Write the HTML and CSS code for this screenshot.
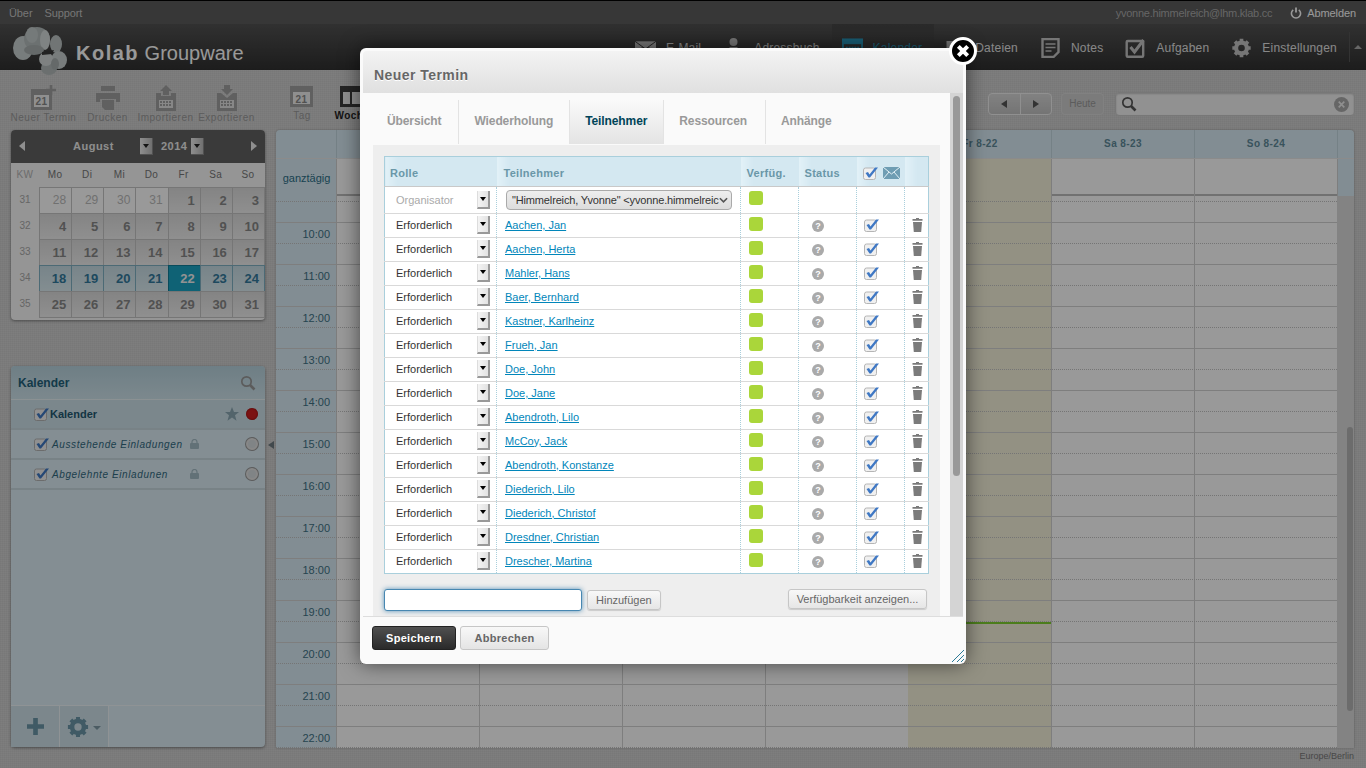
FILE: index.html
```html
<!DOCTYPE html>
<html lang="de">

<head>
    <meta charset="UTF-8">
    <title>Kolab Groupware - Kalender</title>
    <link rel="stylesheet" href="styles.css">
</head>

<body>
    <svg class="defs" aria-hidden="true">
        <symbol id="i-check" viewBox="0 0 15 13">
            <rect x=".5" y="1" width="12" height="11.500" rx="2" fill="#f0f0f0" stroke="#b5b5b5"/>
            <path d="M2.500 6L5 5l1.500 2.500L12 .5h3L7 10.500H5.500z" fill="#3f78c4"/>
        </symbol>
        <symbol id="i-trash" viewBox="0 0 11 14">
            <path d="M4 0h3v1h3.500v1.800H.5V1H4z" fill="#7b7b7b"/>
            <path d="M1 4h9l-.8 10H1.800z" fill="#7b7b7b"/>
        </symbol>
        <symbol id="i-gear" viewBox="0 0 24 24">
            <circle cx="12" cy="12" r="6.500" fill="none" stroke="currentColor" stroke-width="5"/>
            <path d="M12 1v5M12 18v5M1 12h5M18 12h5M4.200 4.200l3.500 3.500M16.300 16.300l3.500 3.500M4.200 19.800l3.500-3.500M16.300 7.700l3.500-3.500" stroke="currentColor" stroke-width="4.400"/>
        </symbol>
        <symbol id="i-search" viewBox="0 0 16 16">
            <circle cx="6.500" cy="6.500" r="4.700" fill="none" stroke="currentColor" stroke-width="1.700"/>
            <path d="M10 10l4.500 4.500" stroke="currentColor" stroke-width="2.600"/>
        </symbol>
        <symbol id="i-lock" viewBox="0 0 9 10">
            <path d="M2 4V3a2.500 2.500 0 0 1 5 0v1" fill="none" stroke="currentColor" stroke-width="1.200"/>
            <rect y="4" width="9" height="6" rx="1" fill="currentColor"/>
        </symbol>
    </svg>

    <div class="topbar">
        <div class="toplinks"><a>Über</a><a>Support</a></div>
        <div class="topuser">
            <span class="username">yvonne.himmelreich@lhm.klab.cc</span>
            <svg class="power" viewBox="0 0 12 12"><path d="M3.200 2.800a4.600 4.600 0 1 0 5.600 0" fill="none" stroke="currentColor" stroke-width="1.600"/><path d="M6 .5v5" stroke="currentColor" stroke-width="1.800"/></svg>
            <a>Abmelden</a>
        </div>
    </div>

    <header class="header">
        <svg class="logo" viewBox="0 0 54 48">
            <ellipse cx="10" cy="21" rx="10" ry="12" fill="#c9d0d0"/>
            <ellipse cx="24" cy="12" rx="13" ry="12" fill="#b4bcbc"/>
            <ellipse cx="19" cy="8" rx="6" ry="8" fill="#c4cbcb"/>
            <ellipse cx="32" cy="13" rx="5" ry="10" fill="#d4dada"/>
            <ellipse cx="43" cy="17" rx="6" ry="9" fill="#bcc4c4"/>
            <ellipse cx="21" cy="23" rx="10" ry="5" fill="#a8b0b0"/>
            <ellipse cx="46" cy="33" rx="8" ry="9" fill="#c8cfcf"/>
            <ellipse cx="36" cy="41" rx="8" ry="7" fill="#b2baba"/>
            <ellipse cx="33" cy="32" rx="7" ry="7" fill="#d2d8d8"/>
            <ellipse cx="42" cy="37" rx="4" ry="6" fill="#a8b0b0"/>
            <path d="M29 25l12-2-2 4-10 1z" fill="#3a3a3a"/>
        </svg>
        <div class="brand"><b>Kolab</b> Groupware</div>
        <nav class="nav">
            <a class="nav-item">
                <svg class="nav-icon" viewBox="0 0 22 20"><rect y="3" width="22" height="14" fill="currentColor"/><path d="M0 3l11 8 11-8M0 17l8-8M22 17l-8-8" fill="none" stroke="#333" stroke-width="1"/></svg>
                E-Mail
            </a>
            <a class="nav-item">
                <svg class="nav-icon" viewBox="0 0 20 20"><circle cx="10" cy="4" r="4" fill="currentColor"/><path d="M6 9h8v11H6z" fill="currentColor"/></svg>
                Adressbuch
            </a>
            <a class="nav-item active">
                <svg class="nav-icon" viewBox="0 0 22 20"><rect x="1" y="1" width="20" height="18" fill="none" stroke="currentColor" stroke-width="2"/><rect x="1" y="1" width="20" height="5" fill="currentColor"/><path d="M4 10h14M4 14h14" stroke="currentColor" stroke-width="2.400" stroke-dasharray="2 1"/></svg>
                Kalender
            </a>
            <a class="nav-item">
                <svg class="nav-icon" viewBox="0 0 20 20"><path d="M2 3h6l2 2h8v13H2z" fill="currentColor"/></svg>
                Dateien
            </a>
            <a class="nav-item">
                <svg class="nav-icon" viewBox="0 0 20 20"><path d="M2 1h16v13l-5 5H2z" fill="none" stroke="currentColor" stroke-width="2.400"/><path d="M5 6h10M5 9.500h10M5 13h6" stroke="currentColor" stroke-width="1.700"/></svg>
                Notes
            </a>
            <a class="nav-item">
                <svg class="nav-icon" viewBox="0 0 20 20"><rect x="1.200" y="3" width="16.500" height="15.800" rx="1" fill="none" stroke="currentColor" stroke-width="2.400"/><path d="M5 9l4 5 9-12" fill="none" stroke="currentColor" stroke-width="3"/></svg>
                Aufgaben
            </a>
            <a class="nav-item">
                <svg class="nav-icon"><use href="#i-gear"/></svg>
                Einstellungen
            </a>
            <span class="nav-more"></span>
        </nav>
    </header>

    <div class="toolbar">
        <a class="tool">
            <svg class="tool-icon" viewBox="0 0 26 26"><rect y="4" width="21" height="21" fill="#a0a0a0"/><rect x="3" y="10" width="15" height="12" fill="#eee"/><text x="10.500" y="20" class="cal-num">21</text><path d="M20 0v10M15 5h10" stroke="#a0a0a0" stroke-width="2.600"/></svg>
            Neuer Termin
        </a>
        <a class="tool tool-print">
            <svg class="tool-icon" viewBox="0 0 26 26"><rect x="6" y="1" width="14" height="5" fill="#a0a0a0"/><path d="M1 8h24v9h-4v-3H5v3H1z" fill="#a0a0a0"/><path d="M7 15h12v10H10l-3-3z" fill="#a0a0a0"/></svg>
            Drucken
        </a>
        <a class="tool">
            <svg class="tool-icon" viewBox="0 0 26 26"><path d="M13 0l6 6h-3v4h-6V6H7z" fill="#a0a0a0"/><path d="M3 8h5v3h10V8h5v18H3z" fill="#a0a0a0"/><rect x="6" y="15" width="14" height="8" fill="#e2e2e2"/><path d="M7 17h12M7 20h12" stroke="#a0a0a0" stroke-width="2" stroke-dasharray="2 1"/></svg>
            Importieren
        </a>
        <a class="tool">
            <svg class="tool-icon" viewBox="0 0 26 26"><path d="M10 0h6v4h3l-6 6-6-6h3z" fill="#a0a0a0"/><path d="M3 8h4l6 5 6-5h4v18H3z" fill="#a0a0a0"/><rect x="6" y="15" width="14" height="8" fill="#e2e2e2"/><path d="M7 17h12M7 20h12" stroke="#a0a0a0" stroke-width="2" stroke-dasharray="2 1"/></svg>
            Exportieren
        </a>
        <a class="tool tool-view">
            <svg class="tool-icon" viewBox="0 0 26 26"><rect x="1" y="3" width="23" height="21" fill="#a0a0a0"/><rect x="4" y="9" width="17" height="12" fill="#eee"/><text x="12.500" y="20" class="cal-num">21</text></svg>
            Tag
        </a>
        <a class="tool tool-week">
            <svg class="tool-icon" viewBox="0 0 26 26"><rect x="1" y="3" width="23" height="21" fill="#3c3c3c"/><rect x="4" y="9" width="7" height="12" fill="#eee"/><rect x="13" y="9" width="8" height="12" fill="#eee"/></svg>
            Woche
        </a>
        <div class="toolbar-right">
            <div class="btn-group">
                <span class="nav-btn"><i class="tri-left"></i></span>
                <span class="nav-btn"><i class="tri-right"></i></span>
            </div>
            <span class="today-btn">Heute</span>
            <div class="searchbox">
                <svg class="search-icon"><use href="#i-search"/></svg>
                <svg class="search-reset" viewBox="0 0 16 16"><circle cx="8" cy="8" r="8" fill="#aaa"/><path d="M5 5l6 6M11 5l-6 6" stroke="#eee" stroke-width="1.800"/></svg>
            </div>
        </div>
    </div>

    <main class="main">
        <aside class="sidebar">
            <section class="minical">
                <div class="minical-head">
                    <i class="arrow-left"></i>
                    <span class="month">August</span>
                    <span class="drop"></span>
                    <span class="year">2014</span>
                    <span class="drop"></span>
                    <i class="arrow-right"></i>
                </div>
                <div class="minical-grid">
                    <span class="dow kw-h">KW</span><span class="dow">Mo</span><span class="dow">Di</span><span class="dow">Mi</span><span class="dow">Do</span><span class="dow">Fr</span><span class="dow">Sa</span><span class="dow">So</span>

                    <span class="kw">31</span><span class="day other">28</span><span class="day other">29</span><span class="day other">30</span><span class="day other">31</span><span class="day">1</span><span class="day">2</span><span class="day">3</span>
                    <span class="kw">32</span><span class="day">4</span><span class="day">5</span><span class="day">6</span><span class="day">7</span><span class="day">8</span><span class="day">9</span><span class="day">10</span>
                    <span class="kw">33</span><span class="day">11</span><span class="day">12</span><span class="day">13</span><span class="day">14</span><span class="day">15</span><span class="day">16</span><span class="day">17</span>
                    <span class="kw">34</span><span class="day week">18</span><span class="day week">19</span><span class="day week">20</span><span class="day week">21</span><span class="day today">22</span><span class="day week">23</span><span class="day week">24</span>
                    <span class="kw">35</span><span class="day">25</span><span class="day">26</span><span class="day">27</span><span class="day">28</span><span class="day">29</span><span class="day">30</span><span class="day">31</span>
                </div>
            </section>

            <section class="callist">
                <div class="callist-head">
                    <span>Kalender</span>
                    <svg class="callist-search"><use href="#i-search"/></svg>
                </div>
                <div class="callist-row selected">
                    <svg class="ic-check"><use href="#i-check"/></svg>
                    <span class="cal-name">Kalender</span>
                    <svg class="star" viewBox="0 0 14 14"><path d="M7 0l2 5h5l-4 3.300 1.500 5.500L7 10.600 2.500 13.800 4 8.300 0 5h5z" fill="currentColor"/></svg>
                    <span class="dot red"></span>
                </div>
                <div class="callist-row">
                    <svg class="ic-check"><use href="#i-check"/></svg>
                    <span class="cal-name shared">Ausstehende Einladungen</span>
                    <svg class="lock"><use href="#i-lock"/></svg>
                    <span class="dot"></span>
                </div>
                <div class="callist-row">
                    <svg class="ic-check"><use href="#i-check"/></svg>
                    <span class="cal-name shared">Abgelehnte Einladunen</span>
                    <svg class="lock"><use href="#i-lock"/></svg>
                    <span class="dot"></span>
                </div>
                <div class="callist-foot">
                    <span class="foot-btn">
                        <svg class="foot-plus" viewBox="0 0 16 16"><path d="M8 0v16M0 8h16" stroke="currentColor" stroke-width="4.400"/></svg>
                    </span>
                    <span class="foot-btn foot-gear">
                        <svg class="foot-gear-icon"><use href="#i-gear"/></svg>
                        <i class="tri-down"></i>
                    </span>
                </div>
            </section>
        </aside>

        <div class="splitter"><i class="tri-left"></i></div>

        <section class="calendar">
            <div class="cal-head">
                <span></span><span></span><span></span><span></span><span></span>
                <span>Fr 8-22</span><span>Sa 8-23</span><span>So 8-24</span><span></span>
            </div>
            <div class="cal-allday">
                <span class="allday-label">ganztägig</span>
                <span></span><span></span><span></span><span></span><span class="is-today"></span><span></span><span></span><span class="allday-end"></span>
            </div>
            <div class="cal-body">
                <div class="cal-rows">
                    <div class="hour"><span class="time"></span><span class="slots"></span></div>
                    <div class="hour"><span class="time">10:00</span><span class="slots"></span></div>
                    <div class="hour"><span class="time">11:00</span><span class="slots"></span></div>
                    <div class="hour"><span class="time">12:00</span><span class="slots"></span></div>
                    <div class="hour"><span class="time">13:00</span><span class="slots"></span></div>
                    <div class="hour"><span class="time">14:00</span><span class="slots"></span></div>
                    <div class="hour"><span class="time">15:00</span><span class="slots"></span></div>
                    <div class="hour"><span class="time">16:00</span><span class="slots"></span></div>
                    <div class="hour"><span class="time">17:00</span><span class="slots"></span></div>
                    <div class="hour"><span class="time">18:00</span><span class="slots"></span></div>
                    <div class="hour"><span class="time">19:00</span><span class="slots now"></span></div>
                    <div class="hour"><span class="time">20:00</span><span class="slots"></span></div>
                    <div class="hour"><span class="time">21:00</span><span class="slots"></span></div>
                    <div class="hour"><span class="time">22:00</span><span class="slots"></span></div>
                </div>
                <div class="cal-scroll"><span class="cal-thumb"></span></div>
            </div>
        </section>
    </main>

    <div class="timezone">Europe/Berlin</div>

    <div class="overlay"></div>

    <div class="dialog">
        <h1 class="dialog-title">Neuer Termin</h1>
        <div class="dialog-body">
            <div class="dialog-content">
                <ul class="tabs">
                    <li>Übersicht</li>
                    <li>Wiederholung</li>
                    <li class="active">Teilnehmer</li>
                    <li>Ressourcen</li>
                    <li>Anhänge</li>
                </ul>
                <div class="tab-panel">
                    <table class="attendees">
                        <colgroup>
                            <col class="c-role"><col class="c-name"><col class="c-avail"><col class="c-status"><col class="c-notify"><col class="c-del">
                        </colgroup>
                        <thead>
                            <tr>
                                <th>Rolle</th>
                                <th>Teilnehmer</th>
                                <th>Verfüg.</th>
                                <th>Status</th>
                                <th class="notify-head">
                                    <svg class="ic-check"><use href="#i-check"/></svg>
                                    <svg class="ic-mail" viewBox="0 0 17 12"><rect width="17" height="12" fill="#6f9db3"/><path d="M0 0l8.500 7L17 0M0 12l6-7M17 12l-6-7" fill="none" stroke="#e4f0f5"/></svg>
                                </th>
                                <th></th>
                            </tr>
                        </thead>
                        <tbody>
                            <tr class="organizer">
                                <td><div class="role muted">Organisator<span class="role-drop"></span></div></td>
                                <td><div class="org-select"><span>"Himmelreich, Yvonne" &lt;yvonne.himmelreic</span><svg viewBox="0 0 10 6"><path d="M1 1l4 4 4-4" fill="none" stroke="#555" stroke-width="1.800"/></svg></div></td>
                                <td><span class="avail"></span></td>
                                <td></td><td></td><td></td>
                            </tr>
                            <tr><td><div class="role">Erforderlich<span class="role-drop"></span></div></td><td><a class="person">Aachen, Jan</a></td><td><span class="avail"></span></td><td><span class="q">?</span></td><td><svg class="ic-check"><use href="#i-check"/></svg></td><td><svg class="ic-trash"><use href="#i-trash"/></svg></td></tr>
                            <tr><td><div class="role">Erforderlich<span class="role-drop"></span></div></td><td><a class="person">Aachen, Herta</a></td><td><span class="avail"></span></td><td><span class="q">?</span></td><td><svg class="ic-check"><use href="#i-check"/></svg></td><td><svg class="ic-trash"><use href="#i-trash"/></svg></td></tr>
                            <tr><td><div class="role">Erforderlich<span class="role-drop"></span></div></td><td><a class="person">Mahler, Hans</a></td><td><span class="avail"></span></td><td><span class="q">?</span></td><td><svg class="ic-check"><use href="#i-check"/></svg></td><td><svg class="ic-trash"><use href="#i-trash"/></svg></td></tr>
                            <tr><td><div class="role">Erforderlich<span class="role-drop"></span></div></td><td><a class="person">Baer, Bernhard</a></td><td><span class="avail"></span></td><td><span class="q">?</span></td><td><svg class="ic-check"><use href="#i-check"/></svg></td><td><svg class="ic-trash"><use href="#i-trash"/></svg></td></tr>
                            <tr><td><div class="role">Erforderlich<span class="role-drop"></span></div></td><td><a class="person">Kastner, Karlheinz</a></td><td><span class="avail"></span></td><td><span class="q">?</span></td><td><svg class="ic-check"><use href="#i-check"/></svg></td><td><svg class="ic-trash"><use href="#i-trash"/></svg></td></tr>
                            <tr><td><div class="role">Erforderlich<span class="role-drop"></span></div></td><td><a class="person">Frueh, Jan</a></td><td><span class="avail"></span></td><td><span class="q">?</span></td><td><svg class="ic-check"><use href="#i-check"/></svg></td><td><svg class="ic-trash"><use href="#i-trash"/></svg></td></tr>
                            <tr><td><div class="role">Erforderlich<span class="role-drop"></span></div></td><td><a class="person">Doe, John</a></td><td><span class="avail"></span></td><td><span class="q">?</span></td><td><svg class="ic-check"><use href="#i-check"/></svg></td><td><svg class="ic-trash"><use href="#i-trash"/></svg></td></tr>
                            <tr><td><div class="role">Erforderlich<span class="role-drop"></span></div></td><td><a class="person">Doe, Jane</a></td><td><span class="avail"></span></td><td><span class="q">?</span></td><td><svg class="ic-check"><use href="#i-check"/></svg></td><td><svg class="ic-trash"><use href="#i-trash"/></svg></td></tr>
                            <tr><td><div class="role">Erforderlich<span class="role-drop"></span></div></td><td><a class="person">Abendroth, Lilo</a></td><td><span class="avail"></span></td><td><span class="q">?</span></td><td><svg class="ic-check"><use href="#i-check"/></svg></td><td><svg class="ic-trash"><use href="#i-trash"/></svg></td></tr>
                            <tr><td><div class="role">Erforderlich<span class="role-drop"></span></div></td><td><a class="person">McCoy, Jack</a></td><td><span class="avail"></span></td><td><span class="q">?</span></td><td><svg class="ic-check"><use href="#i-check"/></svg></td><td><svg class="ic-trash"><use href="#i-trash"/></svg></td></tr>
                            <tr><td><div class="role">Erforderlich<span class="role-drop"></span></div></td><td><a class="person">Abendroth, Konstanze</a></td><td><span class="avail"></span></td><td><span class="q">?</span></td><td><svg class="ic-check"><use href="#i-check"/></svg></td><td><svg class="ic-trash"><use href="#i-trash"/></svg></td></tr>
                            <tr><td><div class="role">Erforderlich<span class="role-drop"></span></div></td><td><a class="person">Diederich, Lilo</a></td><td><span class="avail"></span></td><td><span class="q">?</span></td><td><svg class="ic-check"><use href="#i-check"/></svg></td><td><svg class="ic-trash"><use href="#i-trash"/></svg></td></tr>
                            <tr><td><div class="role">Erforderlich<span class="role-drop"></span></div></td><td><a class="person">Diederich, Christof</a></td><td><span class="avail"></span></td><td><span class="q">?</span></td><td><svg class="ic-check"><use href="#i-check"/></svg></td><td><svg class="ic-trash"><use href="#i-trash"/></svg></td></tr>
                            <tr><td><div class="role">Erforderlich<span class="role-drop"></span></div></td><td><a class="person">Dresdner, Christian</a></td><td><span class="avail"></span></td><td><span class="q">?</span></td><td><svg class="ic-check"><use href="#i-check"/></svg></td><td><svg class="ic-trash"><use href="#i-trash"/></svg></td></tr>
                            <tr><td><div class="role">Erforderlich<span class="role-drop"></span></div></td><td><a class="person">Drescher, Martina</a></td><td><span class="avail"></span></td><td><span class="q">?</span></td><td><svg class="ic-check"><use href="#i-check"/></svg></td><td><svg class="ic-trash"><use href="#i-trash"/></svg></td></tr>
                        </tbody>
                    </table>
                    <div class="add-row">
                        <input class="add-input" type="text">
                        <button class="btn-small">Hinzufügen</button>
                        <button class="btn-small btn-avail">Verfügbarkeit anzeigen...</button>
                    </div>
                </div>
            </div>
            <div class="dialog-scroll"><span class="dialog-thumb"></span></div>
        </div>
        <div class="dialog-foot">
            <button class="btn btn-main">Speichern</button>
            <button class="btn">Abbrechen</button>
        </div>
        <svg class="resize" viewBox="0 0 12 12"><path d="M0 12L12 0M5 12l7-7M9 12l3-3" stroke="#2a7a96" stroke-width="1"/></svg>
        <span class="close">
            <svg viewBox="0 0 12 12"><path d="M2 2l8 8M10 2l-8 8" stroke="#fff" stroke-width="3.400"/></svg>
        </span>
    </div>
</body>

</html>
```

FILE: styles.css
```css
* {
    box-sizing: border-box;
}

html,
body {
    margin: 0;
    height: 100%;
}

body {
    width: 1366px;
    height: 768px;
    overflow: hidden;
    display: flex;
    flex-direction: column;
    font-family: "Liberation Sans", Arial, sans-serif;
    font-size: 11px;
    background-color: #d2d2d2;
    background-image: repeating-linear-gradient(0deg, rgba(0, 0, 0, .025) 0 1px, transparent 1px 2px), repeating-linear-gradient(90deg, rgba(0, 0, 0, .025) 0 1px, transparent 1px 2px);
}

.defs {
    position: absolute;
    width: 0;
    height: 0;
}

.overlay {
    position: absolute;
    inset: 0;
    background: rgba(0, 0, 0, .4);
}

/* top line */
.topbar {
    height: 24px;
    flex: none;
    display: flex;
    justify-content: space-between;
    align-items: center;
    padding: 0 10px 0 9px;
    border-top: 1px solid #000;
    background: #5c5c5c;
    color: #c4c4c4;
}

.toplinks a {
    margin-right: 12px;
    letter-spacing: -.1px;
}

.topuser {
    display: flex;
    align-items: center;
}

.username {
    color: #aaa;
    letter-spacing: -.25px;
}

.power {
    width: 12px;
    height: 12px;
    margin: 0 5px 0 18px;
    color: #fff;
}

.topuser a {
    color: #fff;
    letter-spacing: -.1px;
}

/* header */
.header {
    height: 46px;
    flex: none;
    position: relative;
    display: flex;
    align-items: center;
    background: linear-gradient(#525252, #303030);
}

.logo {
    position: absolute;
    left: 13px;
    top: 3px;
    width: 54px;
    height: 48px;
}

.brand {
    margin: 12px 0 0 76px;
    font-size: 20px;
    color: #fff;
}

.brand b {
    letter-spacing: 1.5px;
}

.nav {
    margin-left: auto;
    height: 100%;
    display: flex;
    align-items: stretch;
}

.nav-item {
    display: flex;
    align-items: center;
    padding: 2px 12px 0 10px;
    font-size: 12px;
    letter-spacing: .2px;
    color: #fff;
    opacity: .85;
}

.nav-icon {
    width: 21px;
    height: 20px;
    margin-right: 10px;
    color: #dcdcdc;
}

.nav-item.active {
    background: linear-gradient(#484848, #3e3e3e);
    color: #2a9cc2;
    opacity: 1;
}

.nav-item.active .nav-icon {
    color: #2a9cc2;
}

.nav-more {
    width: 17px;
    position: relative;
    border-left: 1px solid #555;
    margin: 8px 0;
}

.nav-more::after {
    content: "";
    position: absolute;
    left: 4px;
    top: 13px;
    border: 4px solid transparent;
    border-top: 0;
    border-bottom: 4px solid #aaa;
}

/* toolbar */
.toolbar {
    height: 60px;
    flex: none;
    display: flex;
    align-items: flex-start;
    padding: 15px 11px 0 13px;
}

.tool {
    width: 61px;
    display: flex;
    flex-direction: column;
    align-items: center;
    font-size: 10px;
    letter-spacing: .5px;
    color: #999;
    white-space: nowrap;
}

.tool-print {
    margin: 0 -3px 0 3px;
}

.tool-view {
    margin-left: 20px;
    width: 50px;
}

.tool-week {
    width: 50px;
    color: #222;
    font-weight: bold;
}

.tool-icon {
    width: 26px;
    height: 26px;
    margin-bottom: 1px;
}

.tool-view .tool-icon,
.tool-week .tool-icon {
    margin-top: -2px;
}

.cal-num {
    font-size: 10px;
    font-weight: bold;
    fill: #888;
    text-anchor: middle;
}

.toolbar-right {
    margin-left: auto;
    display: flex;
    align-items: center;
    padding-top: 7px;
}

.btn-group {
    width: 64px;
    height: 22px;
    display: flex;
    border: 1px solid #f0f0f0;
    border-radius: 4px;
    background: linear-gradient(#d8d8d8, #c2c2c2);
}

.nav-btn {
    flex: 1;
    display: flex;
    align-items: center;
    justify-content: center;
}

.nav-btn + .nav-btn {
    border-left: 1px solid #eee;
}

.tri-left,
.tri-right {
    display: block;
    border: 4px solid transparent;
}

.tri-left {
    border-left: 0;
    border-right: 6px solid #555;
}

.tri-right {
    border-right: 0;
    border-left: 6px solid #555;
}

.today-btn {
    width: 43px;
    height: 22px;
    margin-left: 9px;
    border-radius: 4px;
    border: 1px solid #d8d8d8;
    background: #cdcdcd;
    color: #999;
    font-size: 10px;
    text-align: center;
    line-height: 20px;
}

.searchbox {
    width: 240px;
    height: 24px;
    margin-left: 11px;
    display: flex;
    align-items: center;
    justify-content: space-between;
    padding: 0 5px;
    border-radius: 4px;
    background: #f2f2f2;
    border: 1px solid #c6c6c6;
    box-shadow: inset 0 1px 2px rgba(0, 0, 0, .2);
}

.search-icon {
    width: 16px;
    height: 16px;
    color: #555;
}

.search-reset {
    width: 15px;
    height: 15px;
}

/* main layout */
.main {
    height: 618px;
    flex: none;
    display: flex;
    padding-left: 11px;
}

.sidebar {
    width: 254px;
    flex: none;
    display: flex;
    flex-direction: column;
    gap: 46px;
}

.minical {
    height: 190px;
    flex: none;
    background: #f8f8f8;
    border-radius: 4px;
    box-shadow: 0 1px 3px rgba(0, 0, 0, .4);
}

.minical-head {
    height: 33px;
    display: flex;
    align-items: center;
    padding: 0 8px 1px 8px;
    border-radius: 4px 4px 0 0;
    background: #626262;
    color: #ededed;
    font-weight: bold;
    letter-spacing: .5px;
}

.arrow-left,
.arrow-right {
    border: 5px solid transparent;
}

.arrow-left {
    border-left: 0;
    border-right: 6px solid #eee;
    margin-right: 48px;
}

.arrow-right {
    border-right: 0;
    border-left: 6px solid #eee;
    margin-left: auto;
}

.month {
    width: 67px;
}

.year {
    margin: 0 4px 0 8px;
}

.drop {
    width: 13px;
    height: 17px;
    position: relative;
    background: linear-gradient(to right, #eee, #bbb);
    border-right: 1px solid #888;
    border-bottom: 1px solid #888;
}

.drop::after {
    content: "";
    position: absolute;
    left: 3px;
    top: 6px;
    border: 3px solid transparent;
    border-bottom: 0;
    border-top: 4px solid #222;
}

.minical-grid {
    display: grid;
    grid-template-columns: 28px repeat(7, 1fr);
    grid-template-rows: 24px repeat(5, 26px);
    margin-right: 1px;
}

.dow {
    display: flex;
    align-items: center;
    justify-content: center;
    padding-bottom: 2px;
    color: #777;
    font-size: 10px;
    letter-spacing: .4px;
    font-weight: normal;
}

.kw-h {
    color: #b5b5b5;
}

.kw {
    display: flex;
    align-items: center;
    justify-content: center;
    padding-bottom: 1px;
    color: #aaa;
    font-size: 10px;
}

.day {
    display: flex;
    align-items: center;
    justify-content: flex-end;
    padding: 0 5px 1px 0;
    margin: 0 -1px -1px 0;
    border: 1px solid #c5c5c5;
    background: linear-gradient(#dcdcdc, #efefef);
    font-size: 13px;
    font-weight: bold;
    color: #888;
}

.day.other {
    background: #fff;
    font-size: 12px;
    font-weight: normal;
    color: #bbb;
}

.day.week {
    background: linear-gradient(#c8dde5, #dbecf2);
    border-color: #7fb1c4;
    color: #337a9d;
}

.day.today {
    background: #1aa3c4;
    border-color: #0f7d98;
    color: #f4f4f4;
}

/* calendar list */
.callist {
    flex: 1;
    display: flex;
    flex-direction: column;
    margin-bottom: 1px;
    border-radius: 4px;
    background: #dcedf5;
    box-shadow: 0 1px 3px rgba(0, 0, 0, .4);
}

.callist-head {
    height: 34px;
    flex: none;
    display: flex;
    align-items: center;
    justify-content: space-between;
    padding: 0 9px 0 7px;
    border-radius: 4px 4px 0 0;
    background: linear-gradient(#b8d3de, #cfe4ec);
    border-bottom: 1px solid #e8f2f6;
    font-size: 12px;
    font-weight: bold;
    color: #22617a;
}

.callist-search {
    width: 16px;
    height: 16px;
    color: #999;
}

.callist-row {
    height: 30px;
    flex: none;
    display: flex;
    align-items: center;
    padding: 0 7px 0 23px;
    border-bottom: 2px solid #c8d9e0;
    color: #31697f;
}

.callist-row.selected {
    background: #cde1e9;
}

.ic-check {
    width: 15px;
    height: 13px;
    flex: none;
}

.cal-name {
    flex: 1;
    font-weight: bold;
    margin: 0 0 0 1px;
    color: #1f5870;
}

.cal-name.shared {
    font-weight: normal;
    font-style: italic;
    font-size: 10px;
    letter-spacing: .6px;
    margin-left: 3px;
    color: #31697f;
}

.star {
    width: 14px;
    height: 14px;
    margin-right: 7px;
    color: #8aa7b3;
}

.lock {
    width: 9px;
    height: 10px;
    margin-right: 47px;
    color: #a4bcc6;
}

.dot {
    width: 12px;
    height: 12px;
    margin-top: -1px;
    border-radius: 50%;
    border: 2px solid #e2e2e2;
    background: #d6dcdf;
    box-shadow: 0 0 0 1px #999;
}

.dot.red {
    background: #cf1f1f;
    border: 0;
    box-shadow: inset 0 0 2px #700;
}

.callist-foot {
    margin-top: auto;
    height: 42px;
    flex: none;
    display: flex;
    border-top: 1px solid #eef6f9;
    border-radius: 0 0 4px 4px;
}

.foot-btn {
    width: 49px;
    display: flex;
    align-items: center;
    justify-content: center;
    border-right: 1px solid #eef6f9;
    background: #cfe2ea;
    color: #6c97a8;
}

.foot-plus {
    width: 17px;
    height: 17px;
}

.foot-gear-icon {
    width: 22px;
    height: 22px;
}

.tri-down {
    margin: 2px 0 0 4px;
    border: 4px solid transparent;
    border-bottom: 0;
    border-top: 4px solid #7f9aa6;
}

.splitter {
    width: 11px;
    flex: none;
    display: flex;
    align-items: center;
    justify-content: center;
    padding: 12px 0 0 0;
}

.splitter .tri-left {
    border-right-color: #6d7a80;
}

/* calendar */
.calendar {
    width: 1078px;
    flex: none;
    display: flex;
    flex-direction: column;
    border-radius: 4px 4px 0 0;
    overflow: hidden;
    box-shadow: 0 0 2px rgba(0, 0, 0, .3);
}

.cal-head,
.cal-allday {
    flex: none;
    display: grid;
    grid-template-columns: 60px repeat(7, 143px) 17px;
}

.cal-head {
    height: 28px;
    background: #d9ecf5;
    font-weight: bold;
    font-size: 10px;
    letter-spacing: .4px;
    color: #5f8a9a;
    text-align: center;
    line-height: 28px;
}

.cal-head span + span {
    border-left: 1px solid #c3d7df;
}

.cal-allday {
    height: 38px;
    border-top: 1px solid #e8e8e8;
    border-bottom: 2px solid #bdbdbd;
    background: #fff;
}

.cal-allday span + span {
    border-left: 1px solid #d2d2d2;
}

.allday-label {
    padding-left: 1px;
    background: #d9ecf5;
    color: #2b6f88;
    line-height: 39px;
    text-align: center;
}

.allday-end {
    background: #d9ecf5;
}

.is-today {
    background: #f6f2da;
}

.cal-body {
    flex: 1;
    display: flex;
    overflow: hidden;
}

.cal-rows {
    flex: 1;
    margin-top: -15px;
}

.hour {
    height: 42px;
    position: relative;
    display: flex;
    border-bottom: 1px solid #d2d2d2;
}

.hour::after {
    content: "";
    position: absolute;
    left: 0;
    right: 0;
    top: 20px;
    border-top: 1px dotted #c4c4c4;
}

.time {
    width: 60px;
    flex: none;
    padding: 5px 6px 0 0;
    background: #d9ecf5;
    color: #417286;
    font-size: 11px;
    text-align: right;
}

.slots {
    flex: 1;
    background-image: linear-gradient(to right, transparent 572px, #f6f2da 572px, #f6f2da 715px, transparent 715px), repeating-linear-gradient(to right, #d2d2d2 0 1px, transparent 1px 143px);
    background-color: #fff;
}

.slots.now::after {
    content: "";
    position: absolute;
    left: 632px;
    width: 143px;
    top: 21px;
    border-top: 2px solid #7fd030;
}

.cal-scroll {
    width: 17px;
    flex: none;
    background: #dadada;
    padding: 231px 1px 37px 10px;
}

.cal-thumb {
    display: block;
    height: 100%;
    border-radius: 3px;
    background: #b4b4b4;
}

.timezone {
    flex: 1;
    text-align: right;
    padding: 3px 12px 0 0;
    font-size: 9px;
    color: #777;
}

/* dialog */
.dialog {
    position: absolute;
    left: 360px;
    top: 48px;
    width: 606px;
    height: 616px;
    display: flex;
    flex-direction: column;
    padding: 3px;
    border-radius: 6px;
    background: #fafafa;
    box-shadow: 0 0 20px rgba(0, 0, 0, .55);
}

.dialog-title {
    margin: 0;
    height: 42px;
    flex: none;
    padding: 16px 0 0 11px;
    border-radius: 4px 4px 0 0;
    background: linear-gradient(#f3f3f3, #e0e0e0);
    font-size: 14px;
    font-weight: bold;
    letter-spacing: .45px;
    color: #666;
    text-shadow: 0 1px 0 #fff;
}

.dialog-body {
    height: 524px;
    flex: none;
    display: flex;
    overflow: hidden;
    border-bottom: 1px solid #ddd;
}

.dialog-content {
    width: 587px;
    flex: none;
    padding-top: 7px;
}

.dialog-scroll {
    width: 13px;
    flex: none;
    background: #d4d4d4;
    padding: 3px 3px 0 3px;
}

.dialog-thumb {
    display: block;
    height: 380px;
    border-radius: 4px;
    background: #999;
}

.tabs {
    display: flex;
    height: 44px;
    margin: 0 0 1px 9px;
    padding: 0;
    list-style: none;
}

.tabs li {
    padding: 0 16px 2px 15px;
    display: flex;
    align-items: center;
    border-right: 1px solid #e3e3e3;
    font-size: 12px;
    font-weight: bold;
    letter-spacing: -.1px;
    color: #999;
}

.tabs li:first-child {
    padding-right: 17px;
}

.tabs li:nth-child(4) {
    padding-right: 18px;
}

.tabs li:last-child {
    border-right: 0;
}

.tabs li.active {
    color: #004458;
    background: linear-gradient(#fafafa, #e4e4e4);
}

.tab-panel {
    width: 567px;
    height: 472px;
    margin-left: 10px;
    padding: 11px 11px 0 11px;
    background: #eee;
}

.attendees {
    width: 544px;
    table-layout: fixed;
    border-collapse: collapse;
    border: 1px solid #a9cfdc;
    background: #fff;
}

.c-role { width: 112px; }
.c-name { width: 244px; }
.c-avail { width: 58px; }
.c-status { width: 58px; }
.c-notify { width: 48px; }
.c-del { width: 24px; }

.attendees th {
    height: 30px;
    padding: 3px 0 0 6px;
    text-align: left;
    font-size: 11px;
    font-weight: bold;
    letter-spacing: .3px;
    color: #6a97a8;
    background: linear-gradient(to right, #e2f1f7 0, #d4e8f1 12px);
    border-bottom: 1px solid #c9c9c9;
}

.attendees th:first-child {
    padding-left: 5px;
}

.attendees th:nth-child(2) {
    padding-left: 7px;
}

.notify-head {
    white-space: nowrap;
}

.notify-head svg {
    vertical-align: middle;
}

.ic-mail {
    width: 17px;
    height: 12px;
    margin-left: 2px;
}

.attendees td {
    height: 24px;
    padding: 0 0 2px 8px;
    border-bottom: 1px solid #d9d9d9;
    border-right: 1px dotted #a9cfdc;
    color: #333;
    white-space: nowrap;
    overflow: hidden;
}

.attendees td:last-child {
    border-right: 0;
    padding-left: 7px;
}

.attendees tbody tr:last-child td {
    border-bottom: 0;
}

.attendees .organizer td {
    height: 27px;
}

.attendees td:first-child {
    padding: 0 6px 1px 11px;
}

.role {
    display: flex;
    align-items: center;
    justify-content: space-between;
}

.role.muted {
    color: #aaa;
}

.role-drop {
    width: 13px;
    height: 18px;
    position: relative;
    flex: none;
    background: linear-gradient(to right, #f4f4f4, #e2e2e2);
    border-right: 2px solid #999;
    border-bottom: 2px solid #999;
    border-left: 1px solid #ddd;
}

.role-drop::after {
    content: "";
    position: absolute;
    left: 2px;
    top: 6px;
    border: 3px solid transparent;
    border-bottom: 0;
    border-top: 4px solid #000;
}

.org-select {
    width: 226px;
    height: 20px;
    margin: 1px 0 0 1px;
    display: flex;
    align-items: center;
    justify-content: space-between;
    padding: 0 5px;
    border: 1px solid #aaa;
    border-radius: 4px;
    background: linear-gradient(#eee, #dcdcdc);
    color: #333;
}

.org-select span {
    letter-spacing: -.15px;
}

.org-select svg {
    width: 9px;
    height: 6px;
    flex: none;
}

.person {
    color: #0186ba;
    text-decoration: underline;
}

.avail {
    display: block;
    width: 14px;
    height: 14px;
    margin-top: -2px;
    border-radius: 3px;
    background: #aad63a;
}

.q {
    display: block;
    width: 12px;
    height: 12px;
    margin: 2px 0 0 5px;
    border-radius: 50%;
    background: #aaa;
    color: #fff;
    font-size: 9px;
    font-weight: bold;
    text-align: center;
    line-height: 12px;
}

.attendees td .ic-check {
    display: block;
    margin: 2px 0 0 -1px;
}

.ic-trash {
    display: block;
    width: 11px;
    height: 14px;
}

.add-row {
    display: flex;
    align-items: center;
    margin: 15px 2px 0 0;
}

.add-input {
    width: 198px;
    height: 22px;
    border: 1px solid #4787b1;
    border-radius: 3px;
    background: #fff;
    box-shadow: 0 0 5px rgba(71, 135, 177, .9);
    outline: none;
}

.btn-small {
    height: 20px;
    margin-left: 5px;
    padding: 0 8px;
    border: 1px solid #c6c6c6;
    border-radius: 3px;
    background: linear-gradient(#f8f8f8, #e6e6e6);
    box-shadow: 0 1px 1px rgba(0, 0, 0, .15);
    font: 11px "Liberation Sans", Arial, sans-serif;
    color: #666;
}

.btn-avail {
    width: 139px;
    margin: -2px 0 0 auto;
    padding: 0;
}

.dialog-foot {
    display: flex;
    gap: 4px;
    padding: 9px 0 0 9px;
}

.btn {
    width: 89px;
    height: 24px;
    padding: 0;
    border: 1px solid #c6c6c6;
    border-radius: 3px;
    background: linear-gradient(#f8f8f8, #e4e4e4);
    font: bold 11px "Liberation Sans", Arial, sans-serif;
    letter-spacing: .3px;
    color: #666;
}

.btn-main {
    width: 84px;
    border-color: #222;
    background: linear-gradient(#505050, #2a2a2a);
    color: #fff;
}

.resize {
    position: absolute;
    right: 2px;
    bottom: 2px;
    width: 12px;
    height: 12px;
}

.close {
    position: absolute;
    left: 589px;
    top: -11px;
    width: 28px;
    height: 28px;
    display: flex;
    align-items: center;
    justify-content: center;
    border: 3px solid #fff;
    border-radius: 50%;
    background: #000;
}

.close svg {
    width: 14px;
    height: 14px;
}
```
